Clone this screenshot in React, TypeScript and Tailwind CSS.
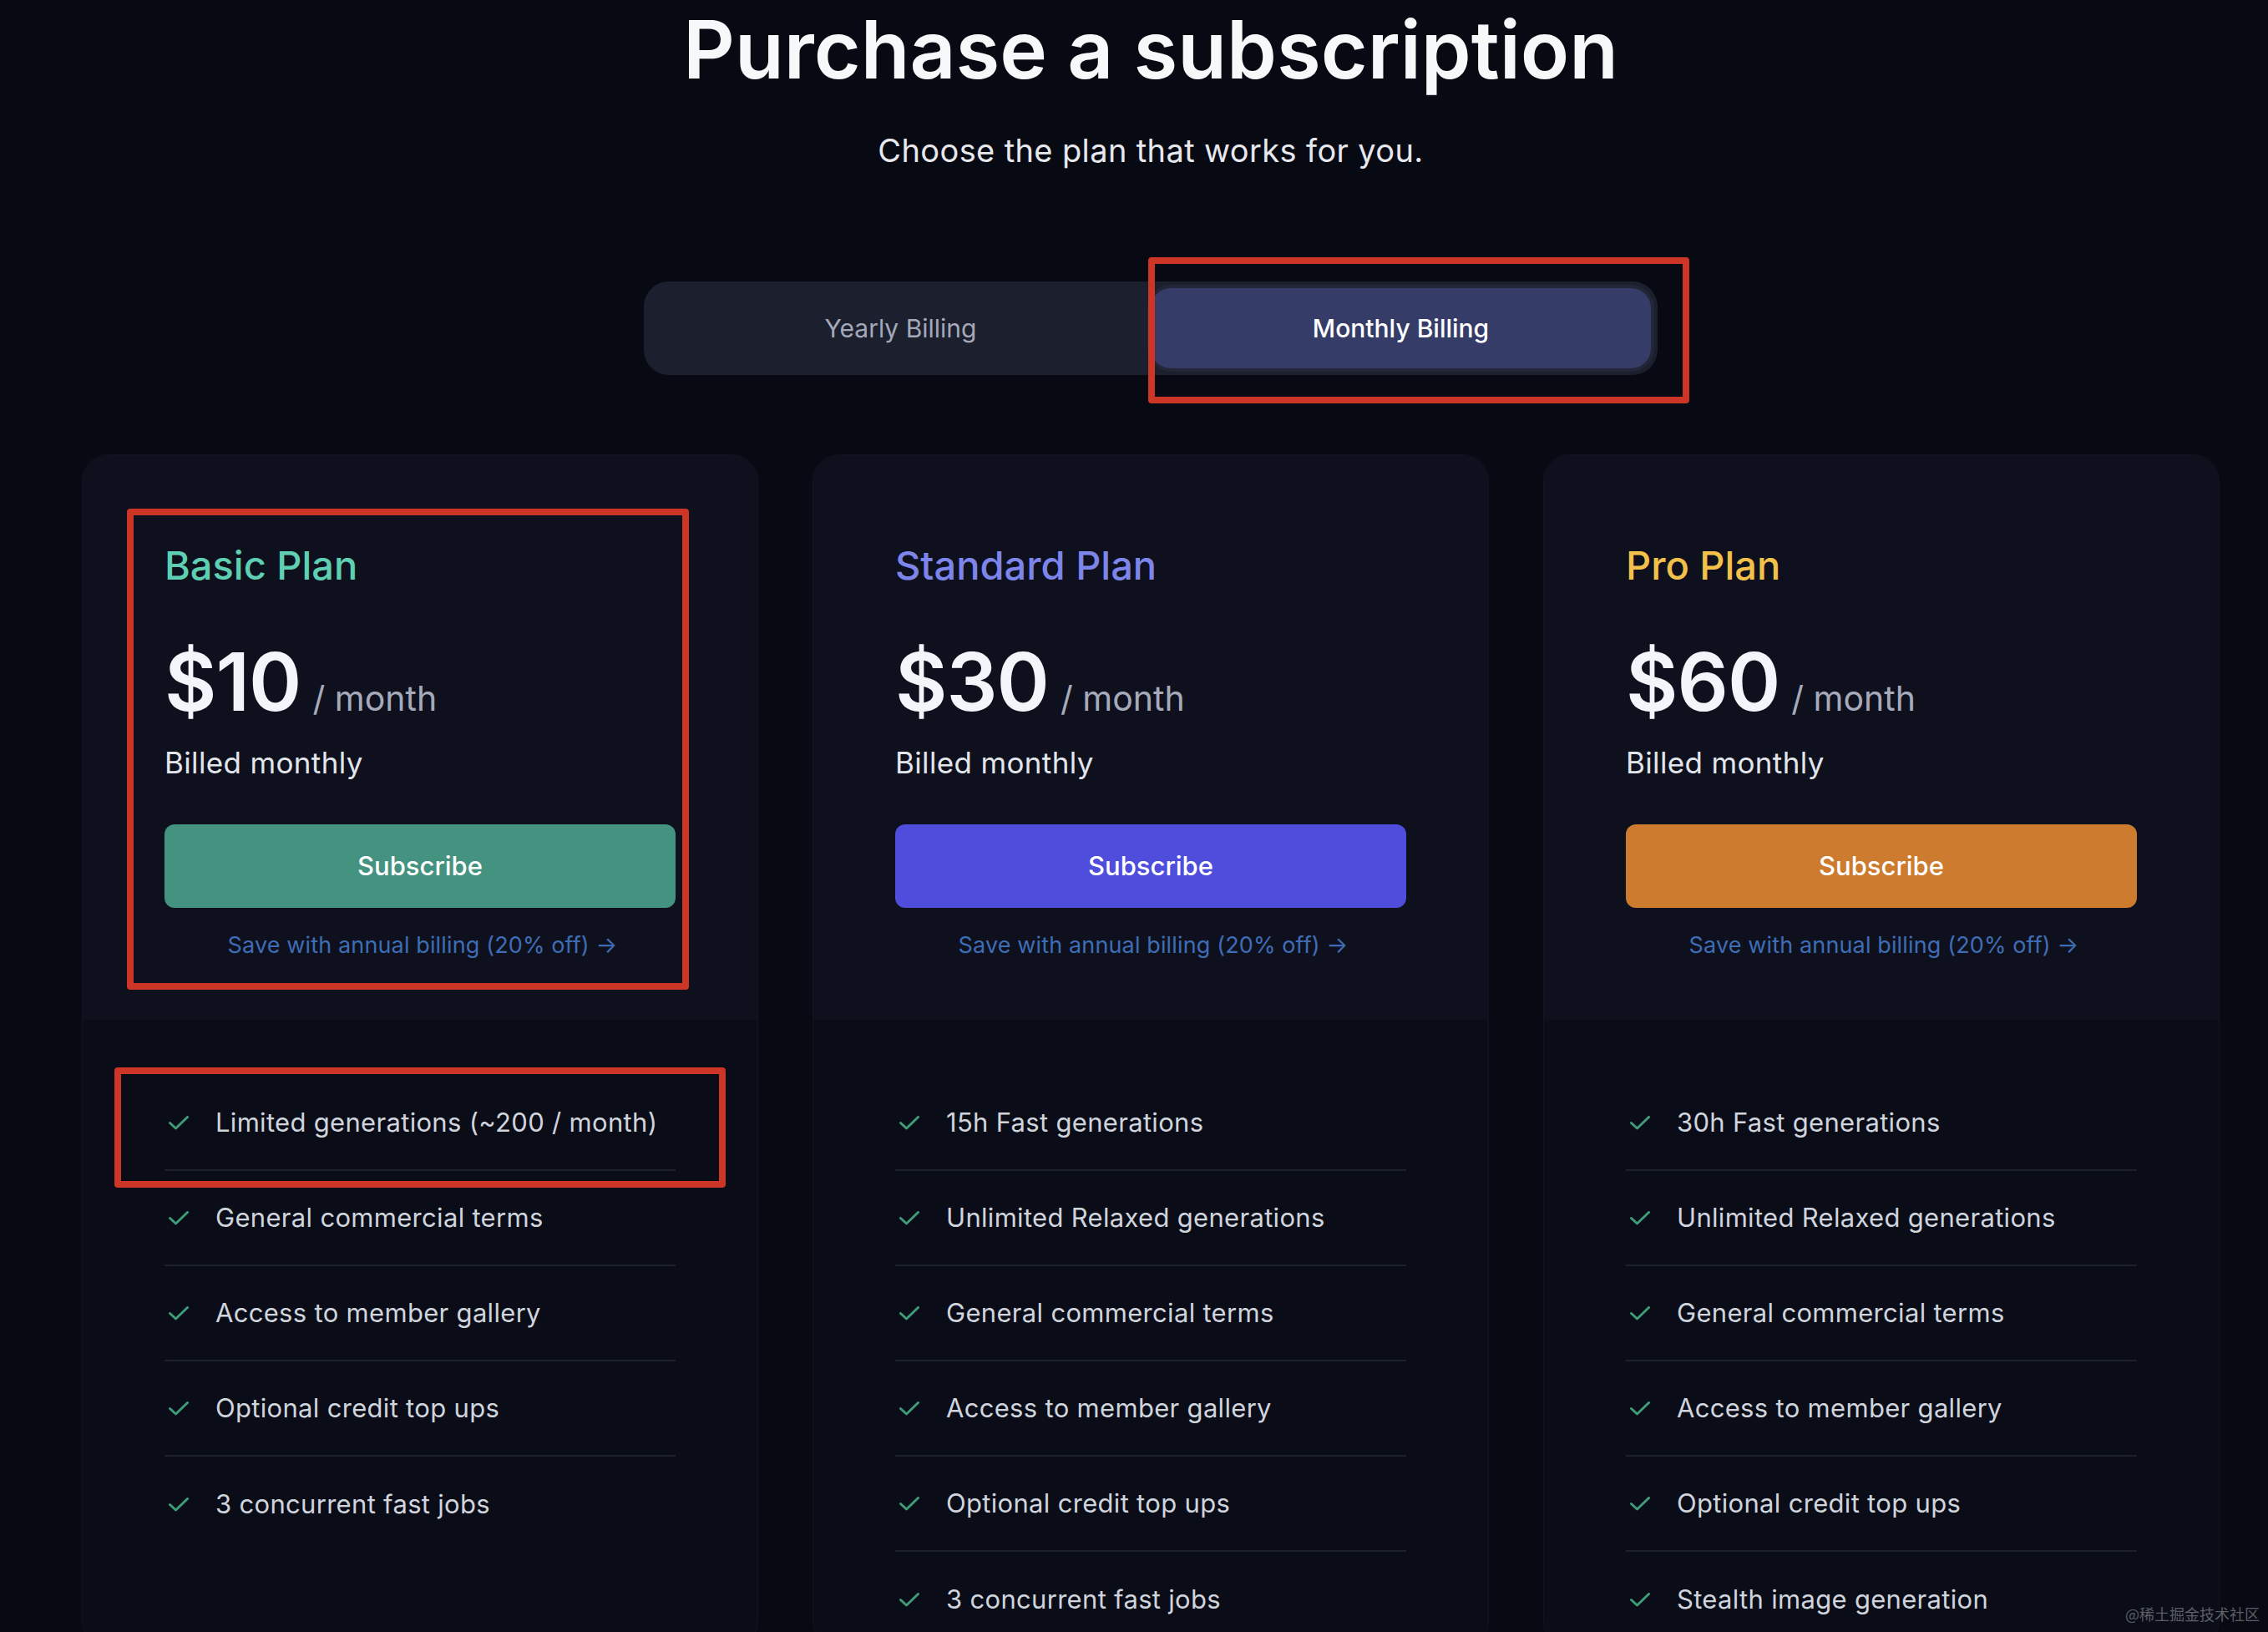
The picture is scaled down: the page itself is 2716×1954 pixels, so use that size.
import React from "react";

type Plan = {
  name: string;
  nameClass: string;
  price: string;
  buttonClass: string;
  features: string[];
};

const PLANS: Plan[] = [
  {
    name: "Basic Plan",
    nameClass: "text-[#5fcfb3]",
    price: "$10",
    buttonClass: "bg-[#439380]",
    features: [
      "Limited generations (~200 / month)",
      "General commercial terms",
      "Access to member gallery",
      "Optional credit top ups",
      "3 concurrent fast jobs",
    ],
  },
  {
    name: "Standard Plan",
    nameClass: "text-[#7d85ea]",
    price: "$30",
    buttonClass: "bg-[#4f4ddc]",
    features: [
      "15h Fast generations",
      "Unlimited Relaxed generations",
      "General commercial terms",
      "Access to member gallery",
      "Optional credit top ups",
      "3 concurrent fast jobs",
    ],
  },
  {
    name: "Pro Plan",
    nameClass: "text-[#f3c14b]",
    price: "$60",
    buttonClass: "bg-[#cd7b2f]",
    features: [
      "30h Fast generations",
      "Unlimited Relaxed generations",
      "General commercial terms",
      "Access to member gallery",
      "Optional credit top ups",
      "Stealth image generation",
    ],
  },
];

function Check() {
  return (
    <svg width="24" height="17" viewBox="0 0 24 17" fill="none" className="ml-[5px] shrink-0">
      <path d="M1.5 8.5 L8.5 15 L22.5 1.5" stroke="#3f9c78" strokeWidth="3" strokeLinecap="round" strokeLinejoin="round" />
    </svg>
  );
}

function PlanCard({ plan }: { plan: Plan }) {
  return (
    <div className="flex w-[810px] flex-col overflow-hidden rounded-[32px] border border-[#12151f] bg-[#0a0d17]">
      <div className="flex flex-col bg-[#0e111d] px-[98px] pt-[108px] pb-[76px]">
        <h2 className={`text-[47px] leading-none font-medium ${plan.nameClass}`}>{plan.name}</h2>
        <div className="mt-[68px] flex items-baseline gap-[14px]">
          <span className="text-[96px] leading-none font-semibold tracking-[-0.01em] text-[#f3f5fb]">{plan.price}</span>
          <span className="text-[41px] leading-none text-[#a6aabb]">/ month</span>
        </div>
        <p className="mt-[32px] text-[35px] leading-none tracking-[0.01em] text-[#e3e5ec]">Billed monthly</p>
        <button
          type="button"
          className={`mt-[56px] flex h-[100px] w-full items-center justify-center rounded-[12px] text-[31px] font-medium text-white ${plan.buttonClass}`}
        >
          Subscribe
        </button>
        <a className="mt-[31px] pl-[6px] text-center text-[27px] leading-none tracking-[0.005em] text-[#3e6db6]">
          Save with annual billing (20% off) →
        </a>
      </div>
      <ul className="flex flex-col px-[98px] pt-[67px]">
        {plan.features.map((feature, i) => (
          <li
            key={feature}
            className={`flex h-[114px] items-center gap-[32px] ${
              i < plan.features.length - 1 ? "border-b-2 border-[#1c202c]" : ""
            }`}
          >
            <Check />
            <span className="text-[31px] tracking-[0.01em] text-[#d0d4dd]">{feature}</span>
          </li>
        ))}
      </ul>
    </div>
  );
}

export default function App() {
  return (
    <div className="relative h-[1954px] w-full overflow-hidden bg-[#080a13] font-[family-name:Inter,sans-serif]">
      <div className="ml-[98px] flex w-[2560px] flex-col items-center">
        <h1 className="mt-[11px] text-[96px] leading-none font-semibold text-[#f7f8fa]">
          Purchase a subscription
        </h1>
        <p className="mt-[54px] text-[38px] leading-none tracking-[0.01em] text-[#e6e8ee]">
          Choose the plan that works for you.
        </p>

        <div className="mt-[138px] flex h-[112px] w-[1214px] rounded-[30px] bg-[#1c1f2d] p-2">
          <button type="button" className="flex-1 text-[30px] text-[#a4a9ba]">
            Yearly Billing
          </button>
          <button
            type="button"
            className="flex-1 rounded-[24px] bg-[#363c68] text-[30px] font-medium text-white shadow-[0_0_0_4px_#232637]"
          >
            Monthly Billing
          </button>
        </div>

        <div className="mt-[95px] flex w-full gap-[65px]">
          {PLANS.map((plan) => (
            <PlanCard key={plan.name} plan={plan} />
          ))}
        </div>
      </div>

      {/* annotation boxes drawn over the screenshot */}
      <div className="pointer-events-none absolute top-[308px] left-[1375px] h-[175px] w-[648px] rounded-[4px] border-[8px] border-[#cd3526]" />
      <div className="pointer-events-none absolute top-[609px] left-[152px] h-[576px] w-[673px] rounded-[4px] border-[8px] border-[#cd3526]" />
      <div className="pointer-events-none absolute top-[1278px] left-[137px] h-[144px] w-[732px] rounded-[4px] border-[8px] border-[#cd3526]" />

      <span className="absolute right-[10px] bottom-[8px] font-['Noto_Sans_CJK_SC',sans-serif] text-[18px] text-[#5b5e67]">
        @稀土掘金技术社区
      </span>
    </div>
  );
}
